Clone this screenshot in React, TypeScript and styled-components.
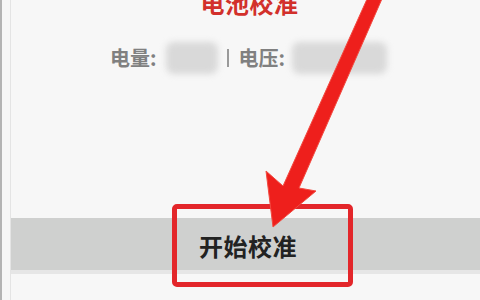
import React from "react";
import styled, { createGlobalStyle } from "styled-components";

const Global = createGlobalStyle`
  html, body { margin: 0; padding: 0; background: #f7f7f7; }
  body { font-family: "Noto Sans CJK SC", "Noto Sans", sans-serif; overflow: hidden; }
`;

const Screen = styled.div`
  position: relative;
  width: 480px;
  height: 300px;
  overflow: hidden;
  box-sizing: border-box;
  background: #f7f7f7;
  border-left: 2px solid #b4b4b4;
`;

const Content = styled.div`
  margin-left: 8px;
  height: 100%;
  border-left: 1px solid #e4e4e4;
  display: flex;
  flex-direction: column;
`;

const Title = styled.div`
  margin-top: -9px;
  height: 24px;
  line-height: 24px;
  font-size: 24px;
  font-weight: 700;
  color: #d2302b;
  text-align: center;
  padding-left: 8px;
  letter-spacing: 0.5px;
`;

const Stats = styled.div`
  margin-top: 33px;
  height: 20px;
  display: flex;
  align-items: center;
  padding-left: 99px;
  font-size: 20px;
  line-height: 20px;
  font-weight: 700;
  color: #808080;
`;

const Label = styled.span`
  white-space: nowrap;
`;

const Blur = styled.span<{ $w: number; $gap: number }>`
  display: inline-block;
  flex: none;
  width: ${(p) => p.$w}px;
  height: 32px;
  margin-left: ${(p) => p.$gap}px;
  border-radius: 8px;
  background: #d9d9d9;
  filter: blur(3px);
`;

const Sep = styled.span`
  display: inline-block;
  flex: none;
  width: 2px;
  height: 18px;
  background: #9a9a9a;
  margin: 0 10px 0 9px;
`;

const Bar = styled.div`
  margin-top: 150px;
  height: 52px;
  background: #cfd0cf;
  display: flex;
  align-items: flex-start;
  padding-left: 161px;
  border-bottom: 4px solid #e6e6e6;
`;

const Highlight = styled.div`
  box-sizing: border-box;
  margin-top: -14px;
  width: 181px;
  height: 83px;
  border: 5px solid #e3262a;
  border-radius: 5px;
  display: flex;
  align-items: center;
  padding-left: 22px;
`;

const ButtonText = styled.span`
  font-size: 24px;
  font-weight: 700;
  color: #222;
  letter-spacing: 0.5px;
`;

const ArrowLayer = styled.svg`
  position: absolute;
  left: -2px;
  top: 0;
  pointer-events: none;
`;

export default function App() {
  return (
    <>
      <Global />
      <Screen>
        <Content>
          <Title>电池校准</Title>
          <Stats>
            <Label>电量:</Label>
            <Blur $w={52} $gap={9} />
            <Sep />
            <Label>电压:</Label>
            <Blur $w={95} $gap={7} />
          </Stats>
          <Bar>
            <Highlight>
              <ButtonText>开始校准</ButtonText>
            </Highlight>
          </Bar>
        </Content>
        <ArrowLayer width="480" height="300" viewBox="0 0 480 300">
          <polygon
            points="372,-12 283,186 266,171 273,227 316,191 299,188 385,-8"
            fill="#ee1f1c"
            stroke="#f24a40"
            strokeWidth="1"
            strokeLinejoin="round"
          />
        </ArrowLayer>
      </Screen>
    </>
  );
}
